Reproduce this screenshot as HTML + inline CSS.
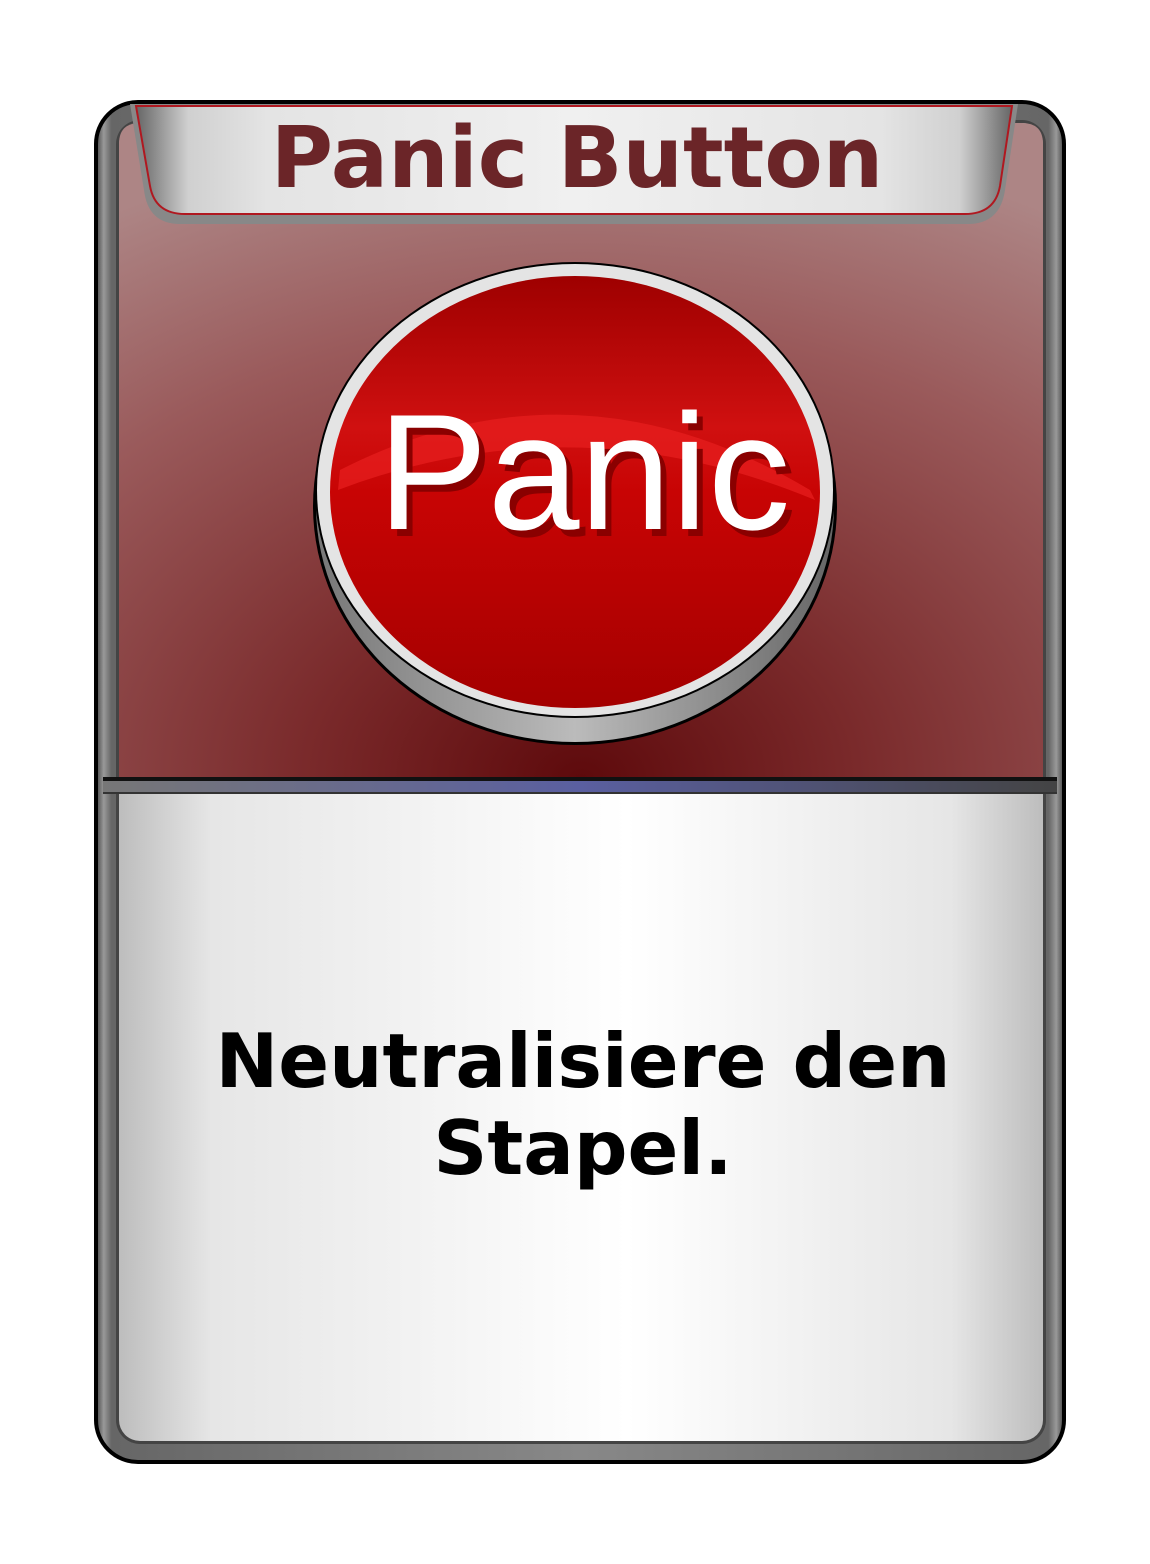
<!DOCTYPE html>
<html><head><meta charset="utf-8"><style>
html,body{margin:0;padding:0;background:#fff;width:1150px;height:1564px;overflow:hidden}
</style></head><body>
<svg width="1150" height="1564" viewBox="0 0 1150 1564" xmlns="http://www.w3.org/2000/svg">
<defs>
<linearGradient id="frame" x1="0" x2="1" y1="0" y2="0">
<stop offset="0" stop-color="#444"/><stop offset="0.008" stop-color="#999"/><stop offset="0.016" stop-color="#666"/>
<stop offset="0.5" stop-color="#888"/><stop offset="0.984" stop-color="#666"/><stop offset="0.992" stop-color="#999"/><stop offset="1" stop-color="#444"/>
</linearGradient>
<radialGradient id="red" cx="0.5" cy="1" r="1" fx="0.5" fy="1">
<stop offset="0" stop-color="#5e0a0c"/><stop offset="0.3" stop-color="#7a2a2b"/><stop offset="0.7" stop-color="#9a5a5b"/><stop offset="1" stop-color="#ad8585"/>
</radialGradient>
<linearGradient id="white" x1="0" x2="1">
<stop offset="0" stop-color="#bdbdbd"/><stop offset="0.1" stop-color="#e6e6e6"/><stop offset="0.55" stop-color="#fff"/><stop offset="0.9" stop-color="#e6e6e6"/><stop offset="1" stop-color="#bdbdbd"/>
</linearGradient>
<linearGradient id="tab" x1="0" x2="1">
<stop offset="0" stop-color="#666"/><stop offset="0.06" stop-color="#d0d0d0"/><stop offset="0.15" stop-color="#e4e4e4"/><stop offset="0.5" stop-color="#f0f0f0"/><stop offset="0.85" stop-color="#e4e4e4"/><stop offset="0.94" stop-color="#d0d0d0"/><stop offset="1" stop-color="#666"/>
</linearGradient>
<linearGradient id="sep" x1="0" x2="1">
<stop offset="0" stop-color="#777"/><stop offset="0.5" stop-color="#5a5fa0"/><stop offset="1" stop-color="#444"/>
</linearGradient>
<linearGradient id="base" x1="0" x2="1">
<stop offset="0" stop-color="#777"/><stop offset="0.5" stop-color="#bbb"/><stop offset="1" stop-color="#666"/>
</linearGradient>
<linearGradient id="face" x1="0" x2="0" y1="0" y2="1">
<stop offset="0" stop-color="#9e0000"/><stop offset="0.35" stop-color="#d01010"/><stop offset="0.5" stop-color="#c80404"/><stop offset="1" stop-color="#a40000"/>
</linearGradient>
</defs>
<rect x="96" y="102" width="968" height="1360" rx="42" fill="url(#frame)" stroke="#000" stroke-width="4"/>
<rect x="116" y="120" width="930" height="1324" rx="24" fill="#444"/>
<rect x="119" y="123" width="924" height="1318" rx="21" fill="url(#white)"/>
<path d="M119 144 Q119 123 140 123 L1022 123 Q1043 123 1043 144 L1043 778 L119 778 Z" fill="url(#red)"/>
<rect x="103" y="777" width="954" height="4" fill="#111"/>
<rect x="103" y="781" width="954" height="12" fill="url(#sep)"/>
<rect x="103" y="792" width="954" height="2" fill="#333"/>
<path d="M130 104 L1018 104 L1005 190 Q1000 224 968 224 L180 224 Q148 224 144 190 Z" fill="#888"/>
<path d="M136 106 L1012 106 L1000 186 Q995 214 965 214 L185 214 Q155 214 150 186 Z" fill="url(#tab)" stroke="#b01820" stroke-width="2"/>
<text x="577" y="187" text-anchor="middle" font-family="DejaVu Sans, sans-serif" font-weight="bold" font-size="85" fill="#6b2528">Panic Button</text>
<ellipse cx="575" cy="506" rx="262" ry="239" fill="#000"/>
<ellipse cx="575" cy="506" rx="259" ry="236" fill="url(#base)"/>
<ellipse cx="575" cy="490" rx="260" ry="228" fill="#000"/>
<ellipse cx="575" cy="490" rx="258" ry="226" fill="#e4e4e4"/>
<ellipse cx="575" cy="492" rx="245" ry="216" fill="url(#face)"/>
<path d="M340 470 Q575 350 810 490 L815 500 Q575 400 338 490 Z" fill="#e82020" opacity="0.7"/>
<text x="590" y="536" text-anchor="middle" font-family="Liberation Sans, sans-serif" font-size="165" fill="#8a0000">Panic</text>
<text x="584" y="529" text-anchor="middle" font-family="Liberation Sans, sans-serif" font-size="165" fill="#fff">Panic</text>
<text x="583" y="1087" text-anchor="middle" font-family="DejaVu Sans, sans-serif" font-weight="bold" font-size="75" fill="#000">Neutralisiere den</text>
<text x="583" y="1174" text-anchor="middle" font-family="DejaVu Sans, sans-serif" font-weight="bold" font-size="75" fill="#000">Stapel.</text>
</svg>
</body></html>
